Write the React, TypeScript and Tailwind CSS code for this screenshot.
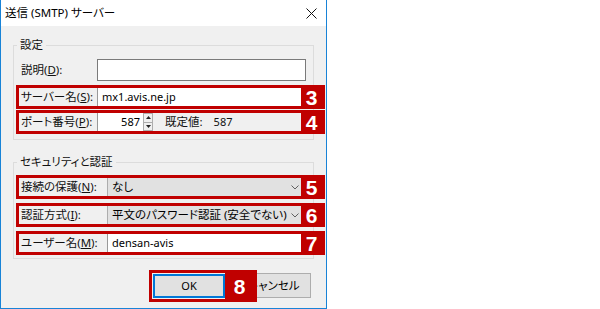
const UI_FONT = "font-['Noto_Sans','Noto_Sans_CJK_JP',sans-serif] [font-feature-settings:'palt'] whitespace-nowrap";

function Badge({ n, w = "w-[21px]" }: { n: string; w?: string }) {
  return (
    <div
      className={`${w} shrink-0 self-stretch bg-[#c00000] flex items-center justify-center text-white text-[21px] leading-none font-bold font-['Liberation_Sans',sans-serif]`}
    >
      {n}
    </div>
  );
}

function Chevron() {
  return (
    <svg width="8" height="5" viewBox="0 0 8 5" className="shrink-0">
      <path d="M0.5 0.5 L4 4 L7.5 0.5" fill="none" stroke="#606060" strokeWidth="1" />
    </svg>
  );
}

function RedRow({
  label,
  labelW,
  n,
  children,
}: {
  label: React.ReactNode;
  labelW: string;
  n: string;
  children: React.ReactNode;
}) {
  return (
    <div className="flex h-[24px] w-[309px] border-[3px] border-[#c00000] bg-[#f0f0f0]">
      <div className={`${labelW} shrink-0 pl-[2px] flex items-center text-[11.5px] text-[#111]`}>
        {label}
      </div>
      {children}
      <Badge n={n} />
    </div>
  );
}

function GroupBox({
  title,
  className,
  children,
}: {
  title: string;
  className: string;
  children: React.ReactNode;
}) {
  return (
    <div className={`relative border border-[#dcdcdc] pl-[2px] ${className}`}>
      <span className="absolute -top-[9px] left-[3px] bg-[#f0f0f0] px-[3px] text-[11.5px] leading-[16px] text-[#111]">
        {title}
      </span>
      {children}
    </div>
  );
}

export default function App() {
  return (
    <div className={`w-[600px] h-[309px] bg-white ${UI_FONT}`}>
      <div className="w-[327px] h-[309px] flex flex-col border-x border-b border-[#1883d7] bg-[#f0f0f0]">
        {/* title bar */}
        <div className="h-[26px] shrink-0 bg-white flex items-center justify-between pl-[4px] pr-[9px]">
          <span className="text-[11.5px] text-black">送信 (SMTP) サーバー</span>
          <svg width="11" height="11" viewBox="0 0 11 11">
            <path d="M0.5 0.5 L10.5 10.5 M10.5 0.5 L0.5 10.5" stroke="#111" strokeWidth="1" />
          </svg>
        </div>

        <div className="px-[12px]">
          <GroupBox title="設定" className="mt-[19px] h-[95px] pt-[13px]">
            <div className="flex h-[22px] items-center">
              <div className="w-[81px] pl-[5px] text-[11.5px] text-[#111]">
                説明(<u>D</u>):
              </div>
              <div className="w-[209px] h-[22px] bg-white border border-[#7a7a7a]" />
            </div>

            <div className="mt-[4px]">
              <RedRow label={<>サーバー名(<u>S</u>):</>} labelW="w-[78px]" n="3">
                <div className="flex-1 bg-white border-l border-[#999] pl-[4px] flex items-center text-[11px] text-black">
                  mx1.avis.ne.jp
                </div>
              </RedRow>
            </div>

            <div className="mt-[1px]">
              <RedRow label={<>ポート番号(<u>P</u>):</>} labelW="w-[78px]" n="4">
                <div className="w-[46px] bg-white border-l border-[#999] pr-[3px] flex items-center justify-end text-[11px] text-black">
                  587
                </div>
                <div className="w-[10px] flex flex-col border border-[#adadad] bg-[#f0f0f0]">
                  <div className="flex-1 flex items-center justify-center border-b border-[#adadad]">
                    <svg width="5" height="3" viewBox="0 0 5 3">
                      <path d="M0 3 L2.5 0 L5 3 Z" fill="#222" />
                    </svg>
                  </div>
                  <div className="flex-1 flex items-center justify-center">
                    <svg width="5" height="3" viewBox="0 0 5 3">
                      <path d="M0 0 L2.5 3 L5 0 Z" fill="#222" />
                    </svg>
                  </div>
                </div>
                <div className="flex-1 flex items-center pl-[12px] text-[11.5px] text-[#111]">
                  <span>既定値:</span>
                  <span className="ml-[11px] text-[11px]">587</span>
                </div>
              </RedRow>
            </div>
          </GroupBox>

          <GroupBox title="セキュリティと認証" className="mt-[22px] h-[97px] pt-[12px]">
            <RedRow label={<>接続の保護(<u>N</u>):</>} labelW="w-[88px]" n="5">
              <div className="flex-1 bg-[#e1e1e1] border-l border-[#adadad] pl-[4px] pr-[2px] flex items-center justify-between text-[11.5px] text-black">
                <span>なし</span>
                <Chevron />
              </div>
            </RedRow>
            <div className="mt-[4px]">
              <RedRow label={<>認証方式(<u>I</u>):</>} labelW="w-[88px]" n="6">
                <div className="flex-1 bg-[#e1e1e1] border-l border-[#adadad] pl-[4px] pr-[2px] flex items-center justify-between text-[11.5px] text-black">
                  <span>平文のパスワード認証 (安全でない)</span>
                  <Chevron />
                </div>
              </RedRow>
            </div>
            <div className="mt-[4px]">
              <RedRow label={<>ユーザー名(<u>M</u>):</>} labelW="w-[88px]" n="7">
                <div className="flex-1 bg-white border-l border-[#999] pl-[4px] flex items-center text-[11px] text-black">
                  densan-avis
                </div>
              </RedRow>
            </div>
          </GroupBox>

          {/* buttons */}
          <div className="mt-[11px] flex justify-end pr-[3px]">
            <div className="relative z-10 flex h-[32px] border-[3px] border-[#c00000]">
              <div className="bg-[#f0f0f0] py-[1px] pl-[1px]">
                <div className="w-[72px] h-[24px] border-2 border-[#0078d7] bg-[#e1e1e1] flex items-center justify-center text-[11px] text-black">
                  OK
                </div>
              </div>
              <Badge n="8" w="w-[29px]" />
            </div>
            <div className="-ml-[21px] mt-[3px] w-[75px] h-[25px] border border-[#adadad] bg-[#e1e1e1] flex items-center justify-center text-[11.5px] text-black">
              キャンセル
            </div>
          </div>
        </div>
      </div>
    </div>
  );
}
